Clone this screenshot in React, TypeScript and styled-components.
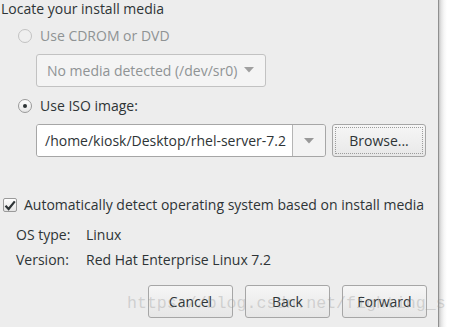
import React from 'react';
import styled, { createGlobalStyle } from 'styled-components';

const GlobalStyle = createGlobalStyle`
  html, body {
    margin: 0;
    padding: 0;
    background: #ffffff;
  }
  body {
    font-family: 'Open Sans', 'DejaVu Sans', sans-serif;
    font-size: 14px;
    color: #2e3436;
  }
`;

const ChevronDown = ({ color = '#8a8a8a' }: { color?: string }) => (
  <svg width="10" height="6" viewBox="0 0 10 6">
    <path d="M0 0 L10 0 L5 5.5 Z" fill={color} />
  </svg>
);

const App: React.FC = () => {
  return (
    <>
      <GlobalStyle />
      <Page>
        <Dialog>
          <Title>Locate your install media</Title>

          <OptionRow>
            <Radio disabled />
            <OptionLabel disabled>Use CDROM or DVD</OptionLabel>
          </OptionRow>
          <IndentRow>
            <MediaCombo>
              <span>No media detected (/dev/sr0)</span>
              <ChevronDown color="#a0a0a0" />
            </MediaCombo>
          </IndentRow>

          <OptionRow>
            <Radio checked />
            <OptionLabel>Use ISO image:</OptionLabel>
          </OptionRow>
          <IndentRow>
            <PathCombo>
              <PathEntry>/home/kiosk/Desktop/rhel-server-7.2</PathEntry>
              <ComboButton>
                <ChevronDown color="#999999" />
              </ComboButton>
            </PathCombo>
            <BrowseButton>Browse...</BrowseButton>
          </IndentRow>

          <CheckRow>
            <CheckBox>
              <svg width="12" height="11" viewBox="0 0 12 11">
                <path d="M1.5 5.8 L4.6 9 L10.8 1.4" fill="none" stroke="#2e3436" strokeWidth="2.2" />
              </svg>
            </CheckBox>
            <OptionLabel>Automatically detect operating system based on install media</OptionLabel>
          </CheckRow>

          <InfoRow first>
            <InfoKey>OS type:</InfoKey>
            <InfoValue>Linux</InfoValue>
          </InfoRow>
          <InfoRow>
            <InfoKey>Version:</InfoKey>
            <InfoValue>Red Hat Enterprise Linux 7.2</InfoValue>
          </InfoRow>

          <ButtonBar>
            <ActionButton>Cancel</ActionButton>
            <ActionButton>Back</ActionButton>
            <ActionButton>Forward</ActionButton>
          </ButtonBar>
        </Dialog>
        <Backdrop />
        <Watermark>https://blog.csdn.net/fighting_s</Watermark>
      </Page>
    </>
  );
};

const Page = styled.div`
  position: relative;
  display: flex;
  width: 458px;
  height: 327px;
  overflow: hidden;
`;

const Dialog = styled.div`
  width: 439px;
  height: 327px;
  flex-shrink: 0;
  background: #ededed;
  border-right: 1px solid #8f8f8f;
  box-sizing: border-box;
  display: flex;
  flex-direction: column;
`;

const Backdrop = styled.div`
  flex: 1;
  background: linear-gradient(to right, #c4c4c4 0px, #e2e2e2 2px, #f6f6f6 5px, #ffffff 8px);
`;

const Title = styled.div`
  height: 17px;
  line-height: 17px;
  padding-left: 1px;
`;

const OptionRow = styled.div`
  display: flex;
  align-items: center;
  height: 18px;
  margin-top: 10px;
  padding-left: 18px;
  gap: 8px;
`;

const Radio = styled.span<{ checked?: boolean; disabled?: boolean }>`
  position: relative;
  width: 14px;
  height: 14px;
  box-sizing: border-box;
  border-radius: 50%;
  border: 1px solid ${(p) => (p.disabled ? '#c2c2c2' : '#9a9a9a')};
  background: ${(p) =>
    p.disabled ? '#efefef' : 'linear-gradient(#ffffff, #e6e6e6)'};
  &::after {
    content: '';
    display: ${(p) => (p.checked ? 'block' : 'none')};
    position: absolute;
    left: 4px;
    top: 4px;
    width: 4px;
    height: 4px;
    border-radius: 50%;
    background: #2e3436;
  }
`;

const OptionLabel = styled.span<{ disabled?: boolean }>`
  color: ${(p) => (p.disabled ? '#8f9394' : '#2e3436')};
  line-height: 18px;
  white-space: nowrap;
`;

const IndentRow = styled.div`
  display: flex;
  margin-top: 9px;
  padding-left: 36px;
  gap: 6px;
`;

const MediaCombo = styled.div`
  width: 230px;
  height: 33px;
  box-sizing: border-box;
  border: 1px solid #c2c2c2;
  border-radius: 3px;
  background: #f4f4f4;
  color: #8f9394;
  display: flex;
  align-items: center;
  justify-content: space-between;
  padding: 0 11px 1px 10px;
`;

const PathCombo = styled.div`
  width: 290px;
  height: 33px;
  box-sizing: border-box;
  border: 1px solid #a6a6a6;
  border-radius: 3px;
  display: flex;
  overflow: hidden;
`;

const PathEntry = styled.div`
  flex: 1;
  background: #ffffff;
  display: flex;
  align-items: center;
  padding-left: 8px;
  white-space: nowrap;
  overflow: hidden;
  color: #2e3436;
`;

const ComboButton = styled.div`
  width: 32px;
  flex-shrink: 0;
  border-left: 1px solid #b5b5b5;
  background: #f3f3f3;
  display: flex;
  align-items: center;
  justify-content: center;
`;

const BrowseButton = styled.button`
  width: 94px;
  height: 33px;
  box-sizing: border-box;
  border: 1px solid #a6a6a6;
  border-radius: 3px;
  background: linear-gradient(#f6f6f6, #e8e8e8);
  font: inherit;
  color: #2e3436;
  padding: 0;
  outline: 1px dotted #9c9c9c;
  outline-offset: -4px;
`;

const CheckRow = styled.div`
  display: flex;
  align-items: center;
  height: 18px;
  margin-top: 39px;
  padding-left: 3px;
  gap: 7px;
`;

const CheckBox = styled.span`
  width: 14px;
  height: 14px;
  box-sizing: border-box;
  border: 1px solid #9a9a9a;
  border-radius: 2px;
  background: linear-gradient(#ffffff, #e4e4e4);
  display: flex;
  align-items: center;
  justify-content: center;
`;

const InfoRow = styled.div<{ first?: boolean }>`
  display: flex;
  height: 18px;
  line-height: 18px;
  margin-top: ${(p) => (p.first ? '12px' : '7px')};
  padding-left: 16px;
`;

const InfoKey = styled.span`
  width: 70px;
`;

const InfoValue = styled.span`
  white-space: nowrap;
`;

const ButtonBar = styled.div`
  display: flex;
  justify-content: flex-end;
  gap: 12px;
  margin-top: 16px;
  padding-right: 11px;
`;

const ActionButton = styled.button`
  width: 85px;
  height: 33px;
  box-sizing: border-box;
  border: 1px solid #a6a6a6;
  border-radius: 3px;
  background: linear-gradient(#f6f6f6, #e6e6e6);
  font: inherit;
  color: #2e3436;
  padding: 0;
`;

const Watermark = styled.div`
  position: absolute;
  left: 127px;
  top: 294px;
  font-family: 'Liberation Mono', 'DejaVu Sans Mono', monospace;
  font-size: 16.6px;
  color: rgba(150, 150, 150, 0.35);
  white-space: nowrap;
  pointer-events: none;
`;

export default App;
